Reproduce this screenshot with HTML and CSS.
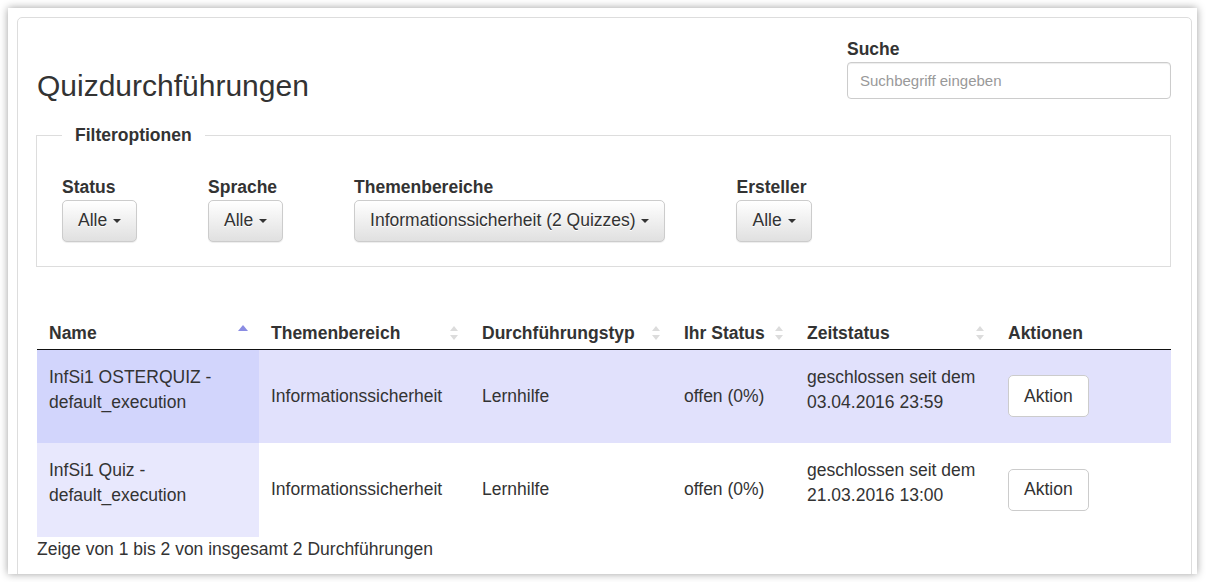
FILE: index.html
```html
<!DOCTYPE html>
<html lang="de">
<head>
<meta charset="utf-8">
<title>Quizdurchführungen</title>
<link rel="stylesheet" href="styles.css">
</head>
<body>
<div class="frame">
  <div class="panel">
    <div class="head">
      <h3 class="title">Quizdurchführungen</h3>
      <div class="search">
        <label class="lbl" for="q">Suche</label>
        <input id="q" class="search-input" type="text" placeholder="Suchbegriff eingeben">
      </div>
    </div>

    <fieldset class="filters">
      <legend class="legend">Filteroptionen</legend>
      <div class="filter-row">
        <div class="filter">
          <span class="lbl">Status</span>
          <button class="btn btn-drop" type="button">Alle <span class="caret"></span></button>
        </div>
        <div class="filter">
          <span class="lbl">Sprache</span>
          <button class="btn btn-drop" type="button">Alle <span class="caret"></span></button>
        </div>
        <div class="filter">
          <span class="lbl">Themenbereiche</span>
          <button class="btn btn-drop" type="button">Informationssicherheit (2 Quizzes) <span class="caret"></span></button>
        </div>
        <div class="filter">
          <span class="lbl">Ersteller</span>
          <button class="btn btn-drop" type="button">Alle <span class="caret"></span></button>
        </div>
      </div>
    </fieldset>

    <table class="grid">
      <colgroup>
        <col class="c-name">
        <col class="c-thema">
        <col class="c-typ">
        <col class="c-status">
        <col class="c-zeit">
        <col class="c-akt">
      </colgroup>
      <thead>
        <tr>
          <th><div class="th-in"><span>Name</span>
            <svg class="sort" viewBox="0 0 10 16" width="10" height="16"><path class="asc" d="M0 6 L5 0 L10 6 Z"/></svg></div></th>
          <th><div class="th-in"><span>Themenbereich</span>
            <svg class="sort" viewBox="0 0 10 16" width="10" height="16"><path class="both" d="M1 6 L5 1 L9 6 Z M1 10 L5 15 L9 10 Z"/></svg></div></th>
          <th><div class="th-in"><span>Durchführungstyp</span>
            <svg class="sort" viewBox="0 0 10 16" width="10" height="16"><path class="both" d="M1 6 L5 1 L9 6 Z M1 10 L5 15 L9 10 Z"/></svg></div></th>
          <th><div class="th-in"><span>Ihr Status</span>
            <svg class="sort" viewBox="0 0 10 16" width="10" height="16"><path class="both" d="M1 6 L5 1 L9 6 Z M1 10 L5 15 L9 10 Z"/></svg></div></th>
          <th><div class="th-in"><span>Zeitstatus</span>
            <svg class="sort" viewBox="0 0 10 16" width="10" height="16"><path class="both" d="M1 6 L5 1 L9 6 Z M1 10 L5 15 L9 10 Z"/></svg></div></th>
          <th><div class="th-in"><span>Aktionen</span></div></th>
        </tr>
      </thead>
      <tbody>
        <tr class="row-sel">
          <td class="sorted"><div class="two">InfSi1 OSTERQUIZ -<br>default_execution</div></td>
          <td>Informationssicherheit</td>
          <td>Lernhilfe</td>
          <td>offen (0%)</td>
          <td><div class="two">geschlossen seit dem<br>03.04.2016 23:59</div></td>
          <td><button class="btn btn-act" type="button">Aktion</button></td>
        </tr>
        <tr>
          <td class="sorted light"><div class="two">InfSi1 Quiz -<br>default_execution</div></td>
          <td>Informationssicherheit</td>
          <td>Lernhilfe</td>
          <td>offen (0%)</td>
          <td><div class="two">geschlossen seit dem<br>21.03.2016 13:00</div></td>
          <td><button class="btn btn-act" type="button">Aktion</button></td>
        </tr>
      </tbody>
    </table>
    <div class="info">Zeige von 1 bis 2 von insgesamt 2 Durchführungen</div>
  </div>
</div>
</body>
</html>
```

FILE: styles.css
```css
* { box-sizing: border-box; }

html, body {
  margin: 0;
  padding: 0;
  background: #fff;
}

body {
  font-family: "Liberation Sans", Arial, Helvetica, sans-serif;
  font-size: 17.5px;
  line-height: 25px;
  color: #333;
}

.frame {
  margin: 8px;
  width: 1189px;
  height: 566px;
  overflow: hidden;
  background: #fff;
  box-shadow: 0 0 8px rgba(0, 0, 0, 0.38);
}

.panel {
  margin: 9px 5px 0 9px;
  border: 1px solid #ddd;
  border-radius: 5px;
  padding: 19px 20px 40px 19px;
}

.head {
  display: flex;
  justify-content: space-between;
  align-items: flex-start;
}

.title {
  margin: 32px 0 0;
  font-size: 30px;
  line-height: 33px;
  font-weight: 400;
  color: #333;
}

.search {
  width: 324px;
  display: flex;
  flex-direction: column;
}

.lbl {
  display: block;
  font-weight: 700;
  line-height: 25px;
  color: #333;
}

.search-input {
  height: 37px;
  width: 100%;
  border: 1px solid #ccc;
  border-radius: 4px;
  padding: 0 12px;
  font-family: inherit;
  font-size: 15px;
  color: #555;
  box-shadow: inset 0 1px 1px rgba(0, 0, 0, 0.075);
  outline: none;
}

.search-input::placeholder {
  color: #999;
}

.filters {
  margin: 20.5px 0 0 -1px;
  padding: 27px 25px 24px;
  border: 1px solid #ddd;
  min-width: 0;
}

.legend {
  padding: 0 13px;
  margin: 0;
  font-weight: 700;
  line-height: 25px;
  color: #333;
}

.filter-row {
  display: flex;
  gap: 71px;
}

.filter {
  display: flex;
  flex-direction: column;
  align-items: flex-start;
}

.btn {
  font-family: inherit;
  font-size: 17.5px;
  line-height: 25px;
  color: #333;
  border: 1px solid #ccc;
  border-radius: 5px;
  padding: 7.5px 15px;
  margin: 0;
  cursor: pointer;
}

.btn-drop {
  background-image: linear-gradient(to bottom, #ffffff 0%, #e0e0e0 100%);
  border-color: #ccc;
  text-shadow: 0 1px 0 #fff;
  box-shadow: inset 0 1px 0 rgba(255, 255, 255, 0.15), 0 1px 1px rgba(0, 0, 0, 0.075);
}

.caret {
  display: inline-block;
  width: 0;
  height: 0;
  margin-left: 1px;
  vertical-align: middle;
  border-top: 4px solid #333;
  border-left: 4px solid transparent;
  border-right: 4px solid transparent;
}

.btn-act {
  background: #fff;
}

.grid {
  width: 100%;
  margin-top: 44px;
  border-collapse: collapse;
  table-layout: fixed;
}

.c-name { width: 222px; }
.c-thema { width: 211px; }
.c-typ { width: 202px; }
.c-status { width: 123px; }
.c-zeit { width: 201px; }
.c-akt { width: 175px; }

.grid th {
  text-align: left;
  font-weight: 700;
  padding: 10px 12px 3px 12px;
  border-bottom: 1px solid #111;
  white-space: nowrap;
}

.th-in {
  display: flex;
  justify-content: space-between;
  align-items: center;
}

.sort {
  display: block;
  flex: none;
  margin-right: -1px;
}

.sort .asc { fill: #8a8ce3; }
.sort .both { fill: #dcdcdc; }

.grid td {
  padding: 15px 12px;
  vertical-align: middle;
  line-height: 25px;
}

.two {
  margin-bottom: 13.5px;
}

.row-sel td {
  background: #e1e1fc;
}

.row-sel td.sorted {
  background: #d2d5fc;
}

td.sorted.light {
  background: #e8e8fd;
}

.info {
  line-height: 25px;
}
```
